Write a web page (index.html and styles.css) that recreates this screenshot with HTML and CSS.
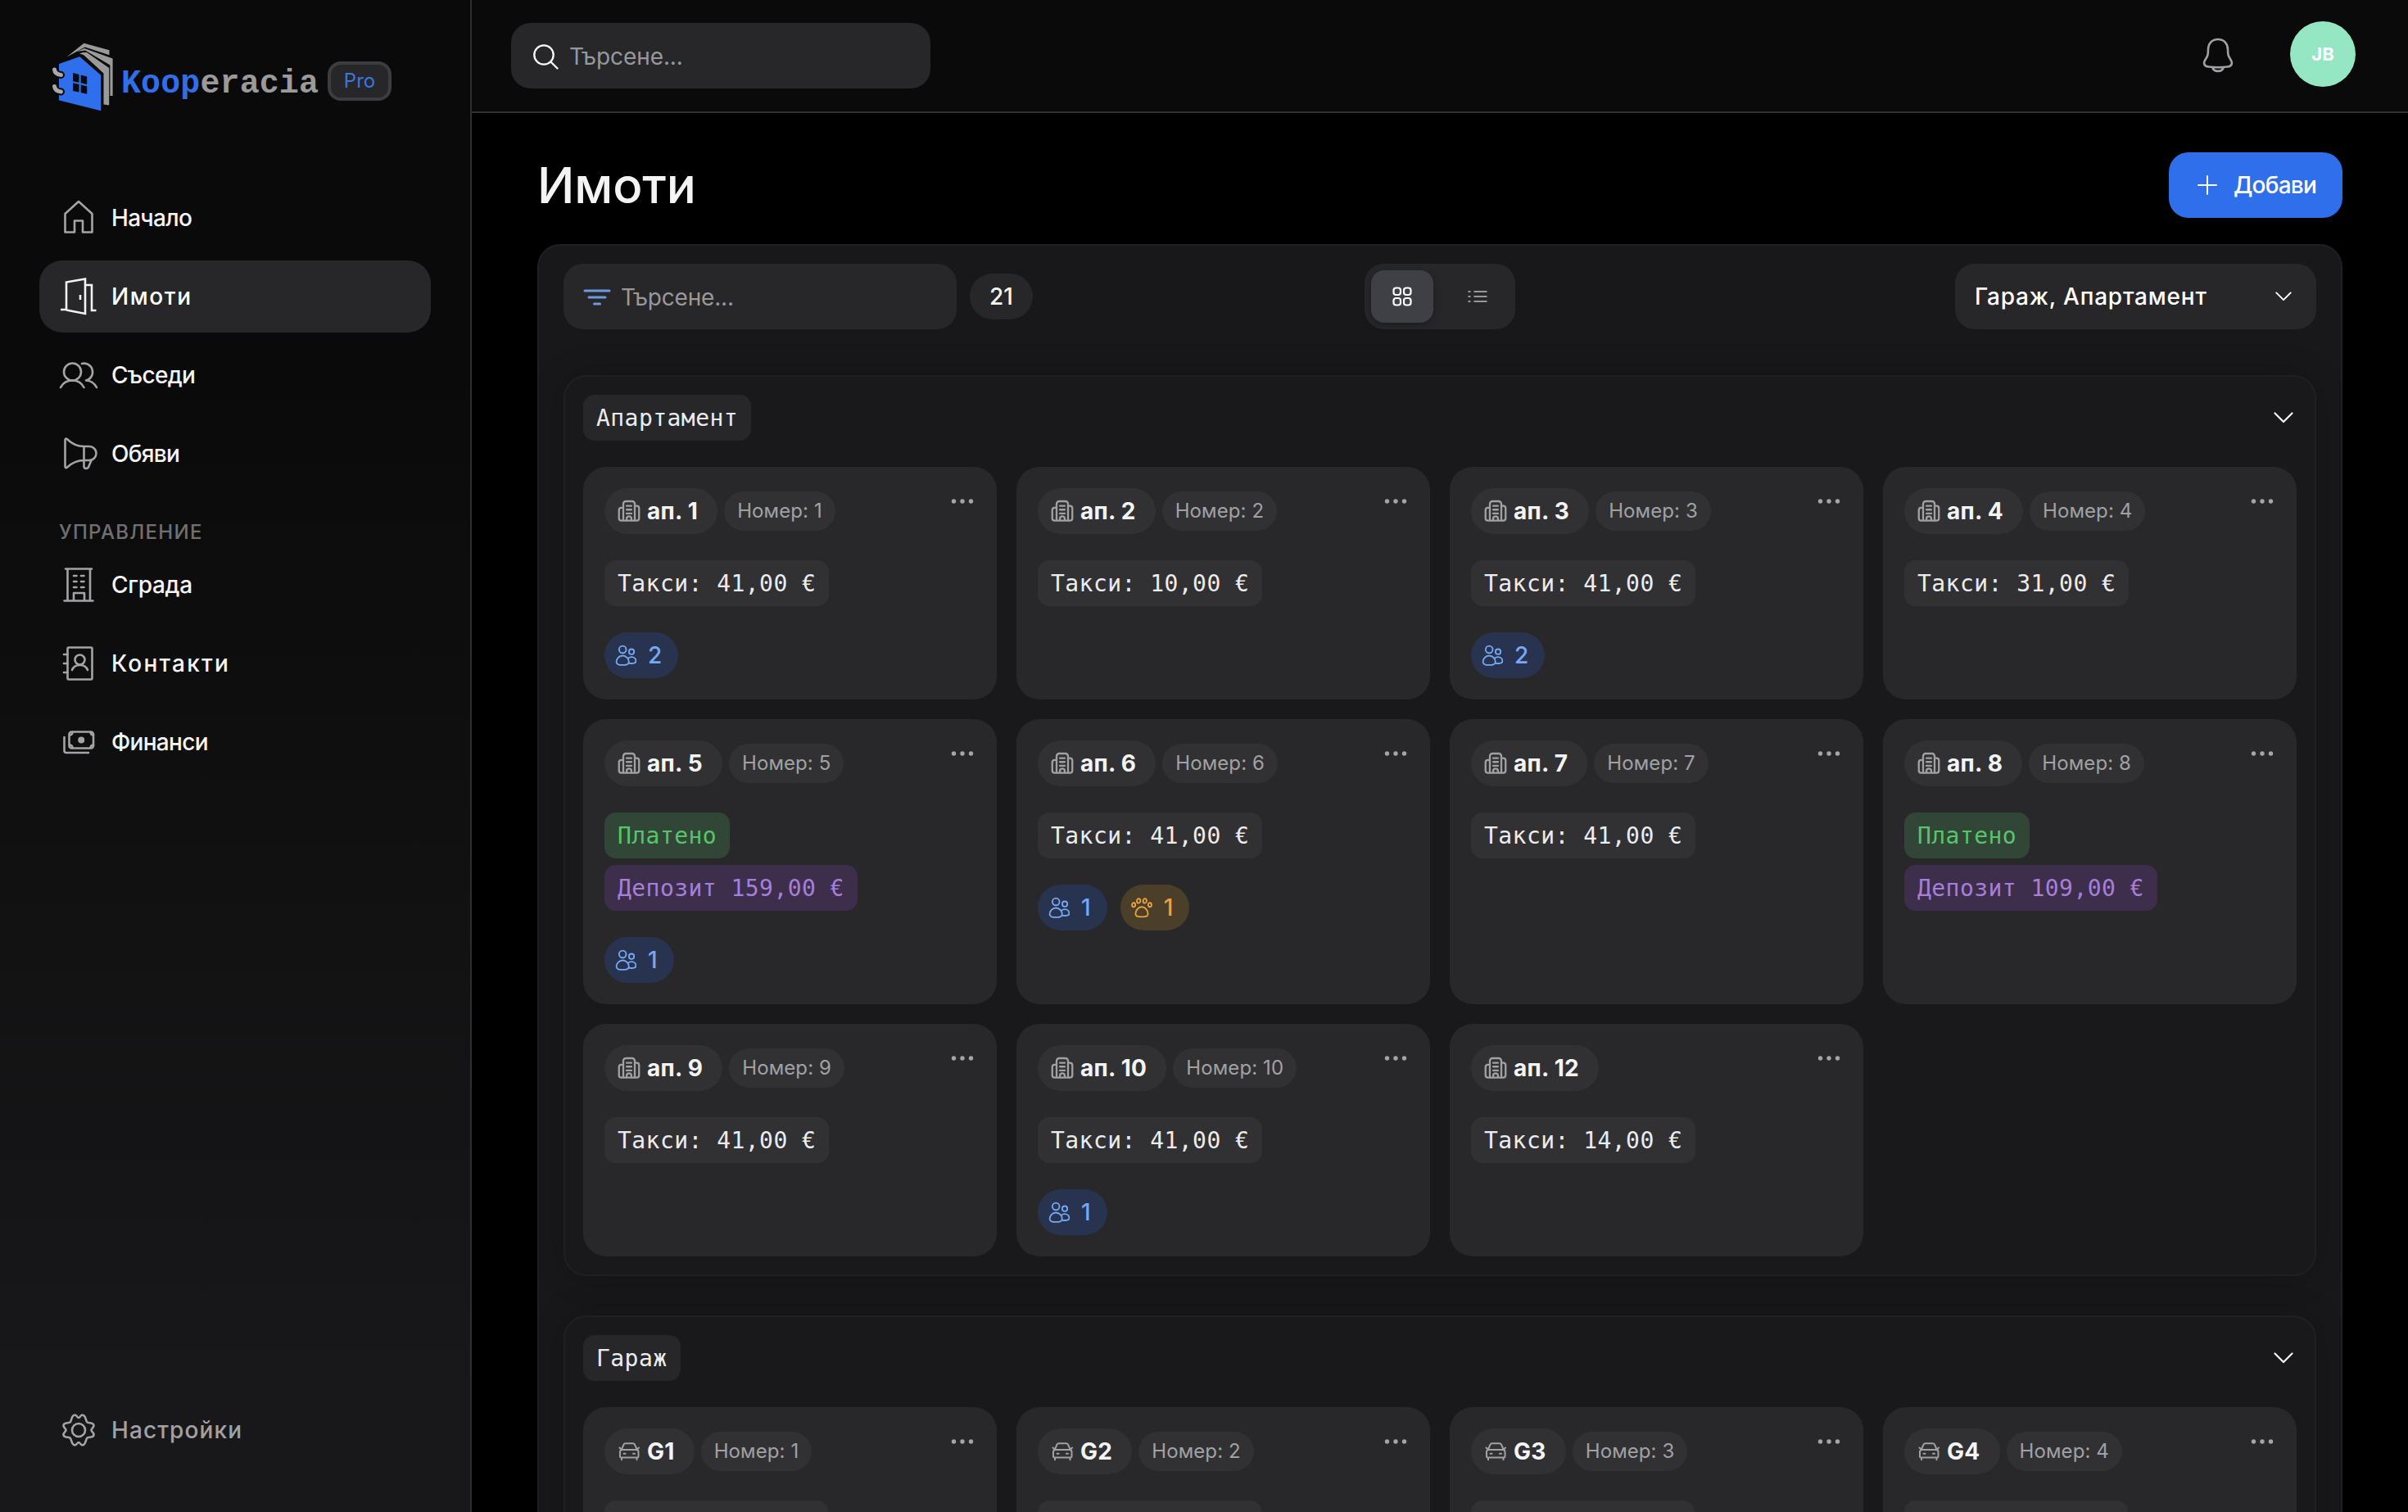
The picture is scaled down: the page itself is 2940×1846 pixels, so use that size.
FILE: index.html
```html
<!DOCTYPE html>
<html lang="bg">
<head>
<meta charset="utf-8">
<title>Имоти</title>
<link rel="stylesheet" href="styles.css">
</head>
<body>
<svg class="sprite" aria-hidden="true">
  <symbol id="building" viewBox="0 0 24 24"><path d="M6 22V4.500a2.800 2.800 0 0 1 2.800-2.800h6.400A2.800 2.800 0 0 1 18 4.500V22M6 8.500H4a2.500 2.500 0 0 0-2.500 2.500v8.500A2.500 2.500 0 0 0 4 22h16a2.500 2.500 0 0 0 2.500-2.500V9A2.500 2.500 0 0 0 20 6.500h-2M9.500 6.500h5M9.500 10.500h5M9.500 14.500h5M9.500 22v-2a2.500 2.500 0 0 1 5 0v2"/></symbol>
  <symbol id="car" viewBox="0 0 28 28"><path d="M4.500 12.500 7.500 5.700A2.500 2.500 0 0 1 9.800 4.200h8.900a2.500 2.500 0 0 1 2.300 1.500l3 6.800M2.500 9.500l2 2M26 9.500l-2 2M5.500 12h17.500a2.500 2.500 0 0 1 2.500 2.500v5.500a1.500 1.500 0 0 1-1.500 1.500H4.500A1.500 1.500 0 0 1 3 20v-5.500A2.500 2.500 0 0 1 5.500 12zM5 22v2.300M23.500 22v2.300M7.500 16.700h2M19 16.700h2"/></symbol>
  <symbol id="people" viewBox="0 0 24 24"><circle cx="8.500" cy="5.500" r="4"/><circle cx="18.500" cy="8" r="2.900"/><path d="M8.500 12.500c-4 0-7 3.500-7 7 0 2.400 3 3.500 7 3.500s7-1.100 7-3.500c0-3.500-3-7-7-7zM14.800 15.300c1-.900 2.300-1.400 3.700-1.400 3 0 5 2.300 5 4.800 0 1.800-2.200 2.500-5 2.500-1.200 0-2.300-.100-3.200-.400"/></symbol>
  <symbol id="paw" viewBox="0 0 24 24"><ellipse cx="2.900" cy="9" rx="1.900" ry="2.300"/><ellipse cx="8.500" cy="4.500" rx="2" ry="2.500"/><ellipse cx="15.500" cy="4.500" rx="2" ry="2.500"/><ellipse cx="21.100" cy="9" rx="1.900" ry="2.300"/><path d="M12 11.300c-3.800 0-7 4-7 7.800 0 2.700 1.800 3.400 7 3.400s7-.700 7-3.400c0-3.800-3.200-7.800-7-7.800z"/></symbol>
  <symbol id="dots" viewBox="0 0 28 8"><circle cx="3.500" cy="4" r="2.700"/><circle cx="14" cy="4" r="2.700"/><circle cx="24.500" cy="4" r="2.700"/></symbol>
  <symbol id="chevron" viewBox="0 0 24 14"><path d="m1.500 1.500 10.500 10.500 10.500-10.500"/></symbol>
</svg>
<div class="app">
  <aside class="sidebar">
    <div class="brand">
      <svg class="logo" viewBox="0 0 76 86">
        <g class="logo-pages">
          <path d="M17.500 17.500 38.500.800l31 8.500v6L39.800 5.500z"/>
          <path d="m30 11 9-4 34.600 12.500V65h-3.200V27.500L40 9.500z"/>
          <path d="M33 13.500 37 12l5 0 27.200 19v45.500l-6.700-1V37.500L38 15z"/>
        </g>
        <path class="logo-house" d="M7.200 25.500 33.300 16.300 60 39.500v44.800L7.200 71z"/>
        <path class="logo-window" d="m25 37 7.500 2v9.700l-7.500-1.500zM34.700 39.500l7.500 2V51l-7.500-1.800zM25 49.300l7.500 1.700v9.500L25 59zM34.700 51.500l7.500 1.800v9.500l-7.500-1.800z"/>
        <path class="logo-ring-gap" d="M2.500 33c.5 5 4 6 8 6.500M2.500 53.500c.5 5 4 6 8 6.500"/>
        <path class="logo-ring" d="M2.500 33c.5 5 4 6 8 6.500M2.500 53.500c.5 5 4 6 8 6.500"/>
      </svg>
      <span class="brand-name"><b>Koop</b>eracia</span>
      <span class="plan">Pro</span>
    </div>
    <nav class="nav">
      <a class="nav-item snug"><svg viewBox="0 0 48 48"><path d="M7.500 19 24 4l16.500 15v22.500H29V27.500H19v14H7.500z"/></svg>Начало</a>
      <a class="nav-item active wide"><svg viewBox="0 0 48 48"><path d="M2 40h7V6.500l23-4v42.500L9 40.500M32 10h8v31h5.500M26 22v6"/></svg>Имоти</a>
      <a class="nav-item snug"><svg viewBox="0 0 48 48"><circle cx="16.500" cy="20" r="10.500"/><path d="M2 39c3-6 8-8.500 14.500-8.500S27.500 33 30.500 39M28 10a10.500 10.500 0 1 1 5 20.500c6 .200 10 3 13 8.500"/></svg>Съседи</a>
      <a class="nav-item snug"><svg viewBox="0 0 48 48"><path d="M7.500 7.500c0-2 1.200-2.500 2.500-1.300C16 12 22 15 30.500 15H37a8.500 8.500 0 0 1 0 17h-6.500C22 32 16 35 10 40.500c-1.300 1.200-2.500.700-2.500-1.300zM30.500 15v24c0 4 5 4 6 0l3-7"/></svg>Обяви</a>
      <h2 class="nav-title">Управление</h2>
      <a class="nav-item"><svg viewBox="0 0 48 48"><path d="M6.500 43.500h35M8 4.500h32M10.500 5v38M38 5v38M18 43V34h13v9M18 13h3.500M27 13h3.500M18 20h3.500M27 20h3.500M18 27h3.500M27 27h3.500"/></svg>Сграда</a>
      <a class="nav-item wider"><svg viewBox="0 0 48 48"><rect x="10.500" y="4.500" width="30" height="39" rx="1.500"/><circle cx="25.500" cy="19.500" r="6"/><path d="M16 32c1.500-4 5-6 9.500-6s8 2 9.500 6M6 13h4.500M6 24h4.500M6 35h4.500"/></svg>Контакти</a>
      <a class="nav-item snug"><svg viewBox="0 0 48 48"><rect x="12.500" y="11.500" width="29.500" height="20" rx="3"/><path d="M13 15.500c2 0 3.500-1.500 3.500-3.500M42 15.500c-2 0-3.500-1.500-3.500-3.500M13 27.500c2 0 3.500 1.500 3.500 3.500M42 27.500c-2 0-3.500 1.500-3.500 3.500M6.500 18v16.500a2.500 2.500 0 0 0 2.500 2.500h27"/><circle class="solid" cx="27.200" cy="21.500" r="2.700"/></svg>Финанси</a>
    </nav>
    <a class="nav-item settings"><svg viewBox="0 0 48 48"><path d="M19.500 5.500c2 0 3 3.500 4.500 3.500s2.500-3.500 4.500-3.500c4.500 0 4 7.500 6 9s8-.500 8 4c0 2.500-3 3.500-3 5.500s3 3 3 5.500c0 4.500-6 2.500-8 4s-1.500 9-6 9c-2 0-3-3.500-4.500-3.500s-2.500 3.500-4.500 3.500c-4.500 0-4-7.500-6-9s-8 .5-8-4c0-2.500 3-3.500 3-5.500s-3-3-3-5.500c0-4.500 6-2.500 8-4s1.500-9 6-9z"/><circle cx="24" cy="24" r="8"/></svg>Настройки</a>
  </aside>
  <div class="main">
    <header class="topbar">
      <label class="field search"><svg class="search-icon" viewBox="0 0 32 32"><circle cx="14" cy="14" r="11.700"/><path d="m22.500 22.500 8 8"/></svg>Търсене...</label>
      <div class="account">
        <svg class="bell" viewBox="0 0 40 44"><path d="M20 3C12.500 3 8 8.500 8 15.500c0 7-1 8.500-3 11.500C1.500 32 3 36 8.500 36.500c8 1 15 1 23 0C37 36 38.500 32 35 27c-2-3-3-4.500-3-11.500C32 8.500 27.500 3 20 3zM13 37c2 6.500 12 6.500 14 0"/></svg>
        <span class="avatar">JB</span>
      </div>
    </header>
    <main class="content">
      <div class="heading"><h1>Имоти</h1><button class="add"><svg viewBox="0 0 24 24"><path d="M12 1v22M1 12h22"/></svg>Добави</button></div>
      <section class="panel">
        <div class="toolbar">
          <div class="tool-start">
            <label class="field filter"><svg class="filter-icon" viewBox="0 0 34 20"><path d="M2 2h30M7 10h20M13.500 18h7"/></svg>Търсене...</label>
            <span class="count">21</span>
          </div>
          <div class="toggle">
            <span class="on"><svg viewBox="0 0 24 24"><rect x="1.500" y="1.500" width="8.500" height="8.500" rx="3"/><rect x="14" y="1.500" width="8.500" height="8.500" rx="3"/><rect x="1.500" y="14" width="8.500" height="8.500" rx="3"/><rect x="14" y="14" width="8.500" height="8.500" rx="3"/></svg></span>
            <span><svg viewBox="0 0 24 24"><path d="M.500 6h3M7.500 6h16M.500 12h3M7.500 12h16M.500 18h3M7.500 18h16"/></svg></span>
          </div>
          <div class="tool-end"><div class="field select">Гараж, Апартамент<svg class="chevron small"><use href="#chevron"/></svg></div></div>
        </div>

        <section class="group">
          <div class="group-head"><span class="tag">Апартамент</span><svg class="chevron"><use href="#chevron"/></svg></div>
          <div class="cards">
            <article class="card">
              <div class="card-head"><span class="unit"><svg><use href="#building"/></svg>ап. 1</span><span class="number">Номер: 1</span><svg class="more"><use href="#dots"/></svg></div>
              <div class="fees"><span class="tag fee">Такси: 41,00 €</span></div>
              <div class="pills"><span class="pill blue"><svg><use href="#people"/></svg>2</span></div>
            </article>
            <article class="card">
              <div class="card-head"><span class="unit"><svg><use href="#building"/></svg>ап. 2</span><span class="number">Номер: 2</span><svg class="more"><use href="#dots"/></svg></div>
              <div class="fees"><span class="tag fee">Такси: 10,00 €</span></div>
            </article>
            <article class="card">
              <div class="card-head"><span class="unit"><svg><use href="#building"/></svg>ап. 3</span><span class="number">Номер: 3</span><svg class="more"><use href="#dots"/></svg></div>
              <div class="fees"><span class="tag fee">Такси: 41,00 €</span></div>
              <div class="pills"><span class="pill blue"><svg><use href="#people"/></svg>2</span></div>
            </article>
            <article class="card">
              <div class="card-head"><span class="unit"><svg><use href="#building"/></svg>ап. 4</span><span class="number">Номер: 4</span><svg class="more"><use href="#dots"/></svg></div>
              <div class="fees"><span class="tag fee">Такси: 31,00 €</span></div>
            </article>
            <article class="card">
              <div class="card-head"><span class="unit"><svg><use href="#building"/></svg>ап. 5</span><span class="number">Номер: 5</span><svg class="more"><use href="#dots"/></svg></div>
              <div class="fees"><span class="tag paid">Платено</span><span class="tag deposit">Депозит 159,00 €</span></div>
              <div class="pills"><span class="pill blue"><svg><use href="#people"/></svg>1</span></div>
            </article>
            <article class="card">
              <div class="card-head"><span class="unit"><svg><use href="#building"/></svg>ап. 6</span><span class="number">Номер: 6</span><svg class="more"><use href="#dots"/></svg></div>
              <div class="fees"><span class="tag fee">Такси: 41,00 €</span></div>
              <div class="pills"><span class="pill blue"><svg><use href="#people"/></svg>1</span><span class="pill amber"><svg><use href="#paw"/></svg>1</span></div>
            </article>
            <article class="card">
              <div class="card-head"><span class="unit"><svg><use href="#building"/></svg>ап. 7</span><span class="number">Номер: 7</span><svg class="more"><use href="#dots"/></svg></div>
              <div class="fees"><span class="tag fee">Такси: 41,00 €</span></div>
            </article>
            <article class="card">
              <div class="card-head"><span class="unit"><svg><use href="#building"/></svg>ап. 8</span><span class="number">Номер: 8</span><svg class="more"><use href="#dots"/></svg></div>
              <div class="fees"><span class="tag paid">Платено</span><span class="tag deposit">Депозит 109,00 €</span></div>
            </article>
            <article class="card">
              <div class="card-head"><span class="unit"><svg><use href="#building"/></svg>ап. 9</span><span class="number">Номер: 9</span><svg class="more"><use href="#dots"/></svg></div>
              <div class="fees"><span class="tag fee">Такси: 41,00 €</span></div>
            </article>
            <article class="card">
              <div class="card-head"><span class="unit"><svg><use href="#building"/></svg>ап. 10</span><span class="number">Номер: 10</span><svg class="more"><use href="#dots"/></svg></div>
              <div class="fees"><span class="tag fee">Такси: 41,00 €</span></div>
              <div class="pills"><span class="pill blue"><svg><use href="#people"/></svg>1</span></div>
            </article>
            <article class="card">
              <div class="card-head"><span class="unit"><svg><use href="#building"/></svg>ап. 12</span><svg class="more"><use href="#dots"/></svg></div>
              <div class="fees"><span class="tag fee">Такси: 14,00 €</span></div>
            </article>
          </div>
        </section>

        <section class="group">
          <div class="group-head"><span class="tag">Гараж</span><svg class="chevron"><use href="#chevron"/></svg></div>
          <div class="cards">
            <article class="card">
              <div class="card-head"><span class="unit"><svg><use href="#car"/></svg>G1</span><span class="number">Номер: 1</span><svg class="more"><use href="#dots"/></svg></div>
              <div class="fees"><span class="tag fee blank"></span></div>
            </article>
            <article class="card">
              <div class="card-head"><span class="unit"><svg><use href="#car"/></svg>G2</span><span class="number">Номер: 2</span><svg class="more"><use href="#dots"/></svg></div>
              <div class="fees"><span class="tag fee blank"></span></div>
            </article>
            <article class="card">
              <div class="card-head"><span class="unit"><svg><use href="#car"/></svg>G3</span><span class="number">Номер: 3</span><svg class="more"><use href="#dots"/></svg></div>
              <div class="fees"><span class="tag fee blank"></span></div>
            </article>
            <article class="card">
              <div class="card-head"><span class="unit"><svg><use href="#car"/></svg>G4</span><span class="number">Номер: 4</span><svg class="more"><use href="#dots"/></svg></div>
              <div class="fees"><span class="tag fee blank"></span></div>
            </article>
          </div>
        </section>
      </section>
    </main>
  </div>
</div>
</body>
</html>
```
FILE: styles.css
```css
* { box-sizing: border-box; }
body { margin: 0; background: #000; color: #f4f4f5; font: 500 28px/40px Inter, "Noto Sans", sans-serif; }
svg { flex: none; fill: none; stroke: currentColor; stroke-width: 2.6; stroke-linecap: round; stroke-linejoin: round; }
.sprite { position: absolute; width: 0; height: 0; }
.app { display: flex; width: 2940px; height: 1846px; overflow: hidden; }

.sidebar { display: flex; flex-direction: column; flex: none; width: 576px; padding: 52px 48px 56px; border-right: 2px solid #2e2e30; background: linear-gradient(#0a0a0a 0%, #0a0a0a 25%, #18181a 92%); }
.brand { display: flex; height: 90px; padding-left: 16px; margin-bottom: 80px; }
.logo { width: 76px; height: 86px; margin-right: 8px; stroke: none; }
.logo-pages { fill: #9a9a9a; }
.logo-house { fill: #2f6feb; stroke: #0a0a0a; stroke-width: 1.5; }
.logo-window { fill: #0a0a0a; }
.logo-ring-gap { stroke: #0a0a0a; stroke-width: 9; }
.logo-ring { stroke: #a8a8a8; stroke-width: 5; }
.brand-name { margin-top: 31px; color: #9a9a9a; font: 700 40px/40px "Liberation Mono", monospace; letter-spacing: .1px; }
.brand-name b { color: #2f6feb; }
.plan { width: 78px; height: 48px; margin: 23px 0 0 11px; border: 4px solid #3d3d40; border-radius: 16px; background: #27272a; color: #3b76e1; font-size: 24px; font-weight: 400; line-height: 40px; text-align: center; }

.nav { display: flex; flex-direction: column; gap: 8px; }
.nav-item { display: flex; align-items: center; gap: 16px; height: 88px; padding-left: 24px; border-radius: 28px; letter-spacing: -.3px; }
.nav-item.snug { letter-spacing: -.7px; }
.nav-item.wide { letter-spacing: 1.600px; }
.nav-item.wider { letter-spacing: 2.200px; }
.nav-item svg { width: 48px; height: 48px; color: #a4a4a6; }
.nav-item.active { background: #27272a; color: #fff; }
.nav-item.active svg { color: #f2f2f2; stroke-linecap: butt; stroke-linejoin: miter; }
.nav-item .solid { fill: currentColor; }
.nav-title { height: 56px; margin: 0; padding: 24px 24px 0; color: #707073; font-size: 24px; font-weight: 500; line-height: 40px; letter-spacing: 1.3px; text-transform: uppercase; }
.settings { margin-top: auto; color: #a1a1a3; letter-spacing: 1.1px; }

.main { flex: 1; min-width: 0; }
.topbar { display: flex; justify-content: space-between; height: 138px; padding: 28px 64px 0 48px; border-bottom: 2px solid #2e2e30; background: #0a0a0a; }
.field { display: flex; align-items: center; height: 80px; border-radius: 24px; background: #27272a; color: #98989b; font-weight: 400; }
.search { width: 512px; padding: 1px 0 0 26px; gap: 13px; letter-spacing: -.1px; }
.search-icon { width: 32px; height: 32px; color: #fafafa; stroke-width: 2.300; }
.account { display: flex; align-items: center; gap: 68px; height: 80px; margin-top: -2px; }
.bell { width: 40px; height: 44px; margin-top: 2px; color: #a1a1a3; }
.avatar { width: 80px; height: 80px; border-radius: 50%; background: #95e6c3; color: #fff; font-size: 22px; font-weight: 700; line-height: 80px; text-align: center; }

.content { padding: 48px 80px 0; }
.heading { display: flex; justify-content: space-between; align-items: center; height: 80px; margin-bottom: 32px; }
h1 { margin: 0; font-size: 60px; font-weight: 500; line-height: 80px; letter-spacing: -.1px; }
.add { display: flex; align-items: center; width: 212px; height: 80px; padding: 0 0 0 35px; border: 0; border-radius: 24px; background: #2f6feb; color: #fff; font: inherit; letter-spacing: -.8px; gap: 20px; }
.add svg { width: 24px; height: 24px; stroke-width: 2; }

.panel { height: 1700px; padding: 22px 30px; border: 2px solid #202022; border-radius: 28px; background: #18181a; }
.toolbar { display: grid; grid-template-columns: 1fr 184px 1fr; height: 80px; margin-bottom: 56px; }
.tool-start { display: flex; align-items: center; gap: 16px; }
.filter { width: 480px; padding: 1px 0 0 24px; gap: 12px; letter-spacing: -.2px; }
.filter-icon { width: 34px; height: 20px; color: #6d9ade; stroke-width: 3; }
.count { width: 77px; height: 56px; border-radius: 28px; background: #27272a; line-height: 56px; text-align: center; }
.toggle { display: flex; gap: 16px; padding: 8px; border-radius: 24px; background: #27272a; color: #98989b; }
.toggle span { display: flex; align-items: center; justify-content: center; width: 76px; height: 64px; border-radius: 16px; }
.toggle .on { background: #3f3f46; color: #fff; box-shadow: 0 4px 10px rgba(0, 0, 0, .25); }
.toggle svg { width: 24px; height: 24px; stroke-width: 2.200; stroke-linecap: butt; }
.tool-end { display: flex; justify-content: flex-end; }
.select { justify-content: space-between; width: 441px; padding: 0 30px 0 24px; color: #fff; font-weight: 500; letter-spacing: .8px; }
.chevron { width: 24px; height: 14px; stroke-width: 2.200; }
.chevron.small { width: 20px; height: 12px; }

.group { margin-bottom: 48px; padding: 22px; border: 2px solid #202022; border-radius: 28px; background: #19191b; box-shadow: 0 0 40px rgba(0, 0, 0, .2); }
.group-head { display: flex; justify-content: space-between; align-items: center; margin-bottom: 32px; padding-right: 4px; }
.tag { height: 56px; padding: 1px 16px 0; border-radius: 14px; background: #27272a; color: #ececee; font: 400 28px/56px "DejaVu Sans Mono", monospace; letter-spacing: .45px; white-space: pre; }
.cards { display: grid; grid-template-columns: repeat(4, 1fr); gap: 24px; }
.card { display: flex; flex-direction: column; gap: 32px; min-height: 284px; padding: 26px; border-radius: 28px; background: #28282a; }
.card-head { display: flex; align-items: center; gap: 8px; height: 56px; }
.unit, .number, .pill { display: flex; align-items: center; border-radius: 28px; }
.unit { gap: 8px; height: 56px; padding: 0 24px 0 16px; background: #313134; font-weight: 700; letter-spacing: .3px; }
.unit svg { width: 28px; height: 28px; color: #a1a1a4; stroke-width: 2; }
.number { height: 48px; padding: 0 16px; background: #313134; color: #a1a1a4; font-size: 24px; font-weight: 400; letter-spacing: .1px; }
.more { width: 28px; height: 8px; margin: -24px 2px 0 auto; fill: #a5a5a7; stroke: none; }
.fees { display: flex; flex-direction: column; align-items: flex-start; gap: 8px; }
.fee { background: #313134; }
.blank { width: 273px; }
.paid { background: #314637; color: #58c46a; }
.deposit { background: #3d2f4b; color: #a87edb; }
.pills { display: flex; gap: 16px; }
.pill { gap: 14px; height: 56px; padding: 0 20px 0 13px; }
.pill svg { width: 26px; height: 26px; stroke-width: 1.700; }
.blue { background: #28344f; color: #76a9f5; }
.amber { background: #4b3f2a; color: #e8a33c; }
```
